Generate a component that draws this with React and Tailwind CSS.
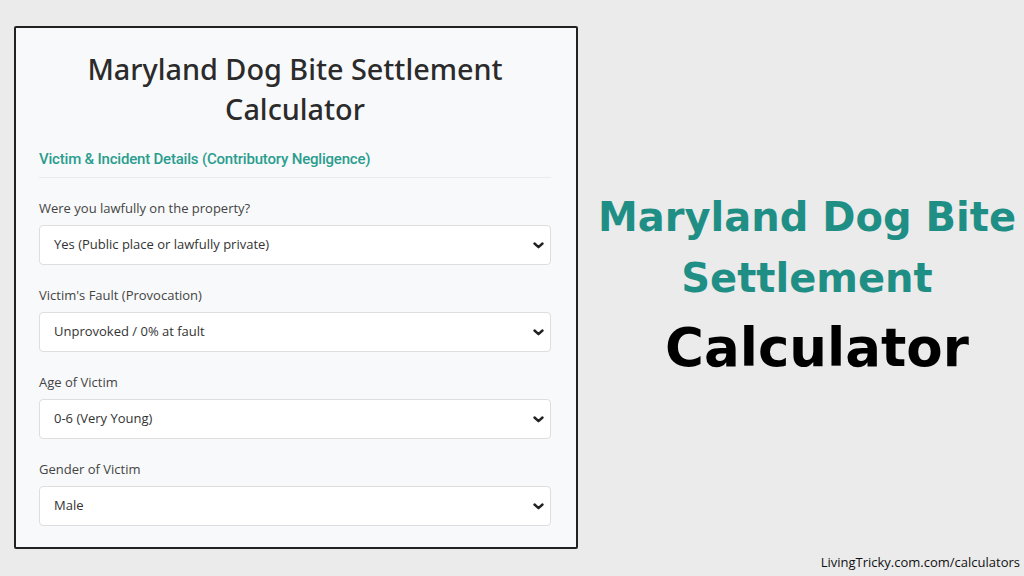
import React from "react";

function Chevron() {
  return (
    <svg width="11" height="7" viewBox="0 0 11 7" className="shrink-0">
      <path d="M1.5 1.5 L5.5 5.2 L9.5 1.5" fill="none" stroke="#222" strokeWidth="2.4" strokeLinecap="round" strokeLinejoin="round" />
    </svg>
  );
}

function Field({ label, value }) {
  return (
    <div className="flex flex-col">
      <div className="text-[13px] leading-[16px] text-[#444] h-[16px]">{label}</div>
      <div className="mt-[9px] h-[40px] rounded-[4px] border border-[#dedede] bg-white flex items-center justify-between pl-[14px] pr-[6px] text-[13px] text-[#333]">
        <span>{value}</span>
        <Chevron />
      </div>
    </div>
  );
}

export default function App() {
  return (
    <div className="w-[1024px] h-[576px] bg-[#ebebeb] flex overflow-hidden" style={{ fontFamily: '"Open Sans", "Noto Sans", sans-serif' }}>
      <div className="ml-[14px] mt-[26px] w-[564px] h-[523px] border-2 border-[#222] rounded-[2px] bg-[#f8f9fa] pl-[23px] pr-[25px] pt-[21px] shrink-0 flex flex-col">
        <h1 className="text-center text-[28.8px] leading-[40px] text-[#2b2b2b] font-medium" style={{ fontFamily: '"Noto Sans", sans-serif' }}>
          Maryland Dog Bite Settlement
          <br />
          Calculator
        </h1>
        <div className="mt-[21px] text-[15px] leading-[18px] font-medium text-[#2a9d8f]" style={{ fontFamily: '"Roboto", sans-serif', letterSpacing: '-0.2px' }}>
          Victim &amp; Incident Details (Contributory Negligence)
        </div>
        <div className="mt-[9px] h-px bg-[#e8ecee]" />
        <div className="mt-[22px] flex flex-col gap-[22px]">
          <Field label="Were you lawfully on the property?" value="Yes (Public place or lawfully private)" />
          <Field label="Victim's Fault (Provocation)" value="Unprovoked / 0% at fault" />
          <Field label="Age of Victim" value="0-6 (Very Young)" />
          <Field label="Gender of Victim" value="Male" />
        </div>
      </div>
      <div className="flex-1 flex flex-col">
        <div className="flex-1 flex flex-col items-center pt-[187px]" style={{ fontFamily: '"DejaVu Sans", sans-serif' }}>
          <div className="text-[40px] leading-[61px] font-bold text-[#1f8f86] text-center pl-[12px]">
            Maryland Dog Bite
            <br />
            Settlement
          </div>
          <div className="text-[53px] leading-[70px] font-bold text-black mt-[4px] pl-[32px]">Calculator</div>
        </div>
        <div className="text-right pr-[4px] pb-[4px] text-[13px] text-[#111]" style={{ fontFamily: '"Open Sans", sans-serif' }}>
          LivingTricky.com.com/calculators
        </div>
      </div>
    </div>
  );
}
